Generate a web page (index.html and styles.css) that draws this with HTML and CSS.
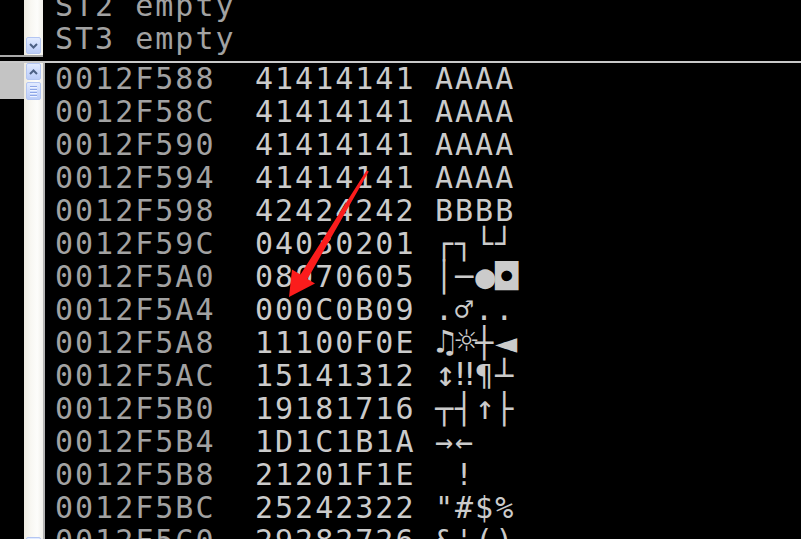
FILE: index.html
```html
<!DOCTYPE html>
<html>
<head>
<meta charset="utf-8">
<link rel="stylesheet" href="styles.css">
</head>
<body>
<div class="screen">
  <div class="top-pane">
    <div class="side">
      <div class="side-main">
        <div class="side-black"></div>
        <div class="sbar sbar-top">
          <div class="sbtn"><svg width="9" height="6" viewBox="0 0 9 6"><path d="M1 1 L4.5 4.5 L8 1" fill="none" stroke="#4d6185" stroke-width="2"/></svg></div>
        </div>
      </div>
      <div class="side-line"></div>
    </div>
    <div class="top-content">
      <div class="line addr">ST2 empty</div>
      <div class="line addr">ST3 empty</div>
      <div class="line addr">ST4 empty</div>
    </div>
  </div>
  <div class="hdiv"></div>
  <div class="bottom-pane">
    <div class="lside"><div class="gray-box"></div></div>
    <div class="sbar sbar-bottom">
      <div class="sbtn"><svg width="9" height="6" viewBox="0 0 9 6"><path d="M1 5 L4.5 1.5 L8 5" fill="none" stroke="#4d6185" stroke-width="2"/></svg></div>
      <div class="sbtn thumb"><span class="grip"></span><span class="grip"></span><span class="grip"></span><span class="grip"></span></div>
      <div class="sbtn sbtn-end"></div>
    </div>
    <div class="vline"></div>
    <div class="dump">
      <div class="row"><span class="addr">0012F588</span><span class="hex">41414141</span><span class="hex">AAAA</span></div>
      <div class="row"><span class="addr">0012F58C</span><span class="hex">41414141</span><span class="hex">AAAA</span></div>
      <div class="row"><span class="addr">0012F590</span><span class="hex">41414141</span><span class="hex">AAAA</span></div>
      <div class="row"><span class="addr">0012F594</span><span class="hex">41414141</span><span class="hex">AAAA</span></div>
      <div class="row"><span class="addr">0012F598</span><span class="hex">42424242</span><span class="hex">BBBB</span></div>
      <div class="row"><span class="addr">0012F59C</span><span class="hex">04030201</span><span class="hex">┌┐└┘</span></div>
      <div class="row"><span class="addr">0012F5A0</span><span class="hex">08070605</span><span class="hex">│─<span class="g g-dot">●</span><span class="g g-inv">◘</span></span></div>
      <div class="row"><span class="addr">0012F5A4</span><span class="hex">000C0B09</span><span class="hex">.♂..</span></div>
      <div class="row"><span class="addr">0012F5A8</span><span class="hex">11100F0E</span><span class="hex"><span class="g g-note">♫</span><span class="g g-sun">☼</span>┼<span class="g g-tri">◄</span></span></div>
      <div class="row"><span class="addr">0012F5AC</span><span class="hex">15141312</span><span class="hex"><span class="g g-updown">↕</span><span class="g g-excl">‼</span>¶┴</span></div>
      <div class="row"><span class="addr">0012F5B0</span><span class="hex">19181716</span><span class="hex">┬┤<span class="g g-up">↑</span>├</span></div>
      <div class="row"><span class="addr">0012F5B4</span><span class="hex">1D1C1B1A</span><span class="hex">→←</span></div>
      <div class="row"><span class="addr">0012F5B8</span><span class="hex">21201F1E</span><span class="hex"> !</span></div>
      <div class="row"><span class="addr">0012F5BC</span><span class="hex">25242322</span><span class="hex">"#$%</span></div>
      <div class="row"><span class="addr">0012F5C0</span><span class="hex">29282726</span><span class="hex">&amp;'()</span></div>
    </div>
  </div>
  <svg class="arrow" width="801" height="539" viewBox="0 0 801 539">
    <polygon points="366.5,170.5 368.8,171.5 307.5,279 315,283.5 289,297 292,269.5 300.5,274.5" fill="#fb1c1c"/>
  </svg>
</div>
</body>
</html>
```
FILE: styles.css
```css
html, body {
  margin: 0;
  padding: 0;
  background: #000;
}
.screen {
  position: relative;
  width: 801px;
  height: 539px;
  overflow: hidden;
  background: #000;
  font-family: "DejaVu Sans Mono", monospace;
  font-size: 30px;
  letter-spacing: 2px;
  line-height: 33px;
}
.top-pane {
  display: flex;
  height: 61px;
  overflow: hidden;
}
.side {
  width: 43px;
  flex: none;
  display: flex;
  flex-direction: column;
}
.side-main {
  height: 55px;
  display: flex;
}
.side-black {
  width: 24px;
  background: #000;
}
.side-line {
  height: 2px;
  background: #a9a9a9;
}
.sbar {
  width: 19px;
  flex: none;
  box-sizing: border-box;
  padding: 0 2px;
  display: flex;
  flex-direction: column;
  background: linear-gradient(to right, #eeebe2 0%, #f8f7f2 35%, #fdfdfb 70%, #f1f0ea 100%);
}
.sbar-top {
  justify-content: flex-end;
  padding-bottom: 1px;
}
.sbar-bottom {
  height: 491px;
  gap: 2px;
}
.sbtn {
  height: 17px;
  flex: none;
  box-sizing: border-box;
  border: 1px solid #b4c6f2;
  border-radius: 2px;
  background: linear-gradient(to bottom, #e2ebff 0%, #cddbfd 50%, #bccdf8 100%);
  display: flex;
  align-items: center;
  justify-content: center;
}
.thumb {
  height: 18px;
  flex-direction: column;
  gap: 1px;
}
.grip {
  display: block;
  width: 7px;
  height: 1px;
  background: #8ea6e6;
  border-bottom: 1px solid #eef3ff;
}
.sbtn-end {
  margin-top: auto;
}
.top-content {
  flex: 1;
  height: 58px;
  overflow: hidden;
  padding-left: 12px;
}
.top-content .line:first-child {
  margin-top: -11px;
}
.line {
  height: 33px;
  white-space: pre;
}
.hdiv {
  height: 2px;
  background: #c9c9c9;
}
.bottom-pane {
  display: flex;
  height: 476px;
  overflow: hidden;
  align-items: flex-start;
}
.lside {
  width: 24px;
  flex: none;
}
.gray-box {
  height: 36px;
  background: #c4c4c4;
}
.vline {
  width: 2px;
  height: 476px;
  flex: none;
  background: #b3b3b3;
}
.dump {
  flex: 1;
  padding-left: 10px;
  margin-top: -1px;
}
.row {
  display: grid;
  grid-template-columns: 200px 180px 1fr;
  height: 33px;
  white-space: pre;
}
.addr {
  color: #a2a2a2;
}
.hex {
  color: #cbcbcb;
}
.g {
  display: inline-block;
  width: 20px;
  text-align: center;
  letter-spacing: 0;
  line-height: 33px;
  height: 33px;
  overflow: visible;
  vertical-align: top;
  position: relative;
}
.g-dot {
  font-size: 33px;
}
.g-inv {
  font-size: 38px;
  top: 1px;
}
.g-note {
  font-size: 33px;
  top: -1px;
}
.g-sun {
  font-size: 38px;
  top: -1px;
}
.g-tri {
  font-size: 37px;
  top: 0;
}
.g-updown {
  font-size: 35px;
  top: -1px;
}
.g-excl {
  font-size: 32px;
  top: -1px;
}
.g-up {
  font-size: 33px;
  top: -1px;
}
.arrow {
  position: absolute;
  left: 0;
  top: 0;
  pointer-events: none;
}
```
